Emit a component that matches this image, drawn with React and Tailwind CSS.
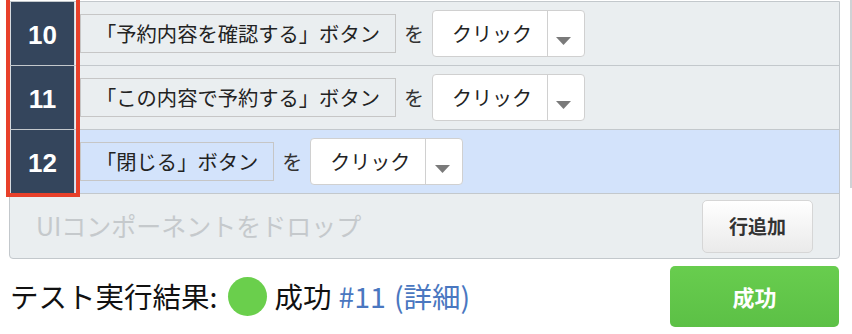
import React from "react";

const rows = [
  { n: 10, label: "「予約内容を確認する」ボタン" },
  { n: 11, label: "「この内容で予約する」ボタン" },
  { n: 12, label: "「閉じる」ボタン", active: true },
];

const jp = { fontFamily: '"Noto Sans CJK JP", "Noto Sans", sans-serif' };

const ActionSelect = () => (
  <div className="flex h-[47px] w-[153px] rounded-[4px] border border-[#d0d0d0] bg-white">
    <div className="flex w-[114px] items-center pl-[19px] text-[20px] text-[#222]">
      クリック
    </div>
    <div className="flex flex-1 items-end justify-center border-l border-[#d0d0d0] pb-[11px] pr-[4px]">
      <svg width="15" height="8" viewBox="0 0 15 8">
        <polygon points="0,0 15,0 7.5,8" fill="#7a7a7a" />
      </svg>
    </div>
  </div>
);

const StepRow = ({ n, label, active }) => (
  <div
    className={
      "flex h-[64px] border-b border-[#c3c8cc] " +
      (active ? "bg-[#d3e3fb]" : "bg-[#eaeef0]")
    }
  >
    <div
      className="flex w-[65px] items-center justify-center border-x border-[#d6dbe0] bg-[#34455c] pt-[3px] text-[26px] font-bold text-white"
      style={{ fontFamily: '"Liberation Sans", Arial, sans-serif' }}
    >
      {n}
    </div>
    <div className="flex items-center pl-[5px]">
      <div className="flex h-[39px] items-center border border-[#c6c6c6] px-[15px] text-[20.3px] text-[#222]">
        {label}
      </div>
      <span className="mx-[8px] text-[20px] text-[#333]">を</span>
      <ActionSelect />
    </div>
  </div>
);

const App = () => {
  return (
    <div className="flex h-[334px] w-[852px] items-start overflow-hidden bg-white" style={jp}>
      <div className="relative w-[850px]">
        <div className="ml-[9px] mt-[1px] w-[831px] rounded-b-[4px] border-x border-y border-[#c3c8cc] bg-[#eaeef0]">
          {rows.map((r) => (
            <StepRow key={r.n} {...r} />
          ))}
          <div className="flex h-[64px] items-center justify-between pl-[26px] pr-[26px]">
            <span className="text-[25px] text-[#c5c9cc]">UIコンポーネントをドロップ</span>
            <button className="h-[53px] w-[111px] rounded-[5px] border border-[#d6d6d6] bg-linear-to-b from-white to-[#eaeaea] text-[19px] font-bold text-[#333]">
              行追加
            </button>
          </div>
        </div>

        <div className="pointer-events-none absolute left-[6px] top-[-6px] h-[203px] w-[74px] border-4 border-[#e8402a]" />

        <div className="mt-[7px] flex items-center justify-between">
          <div className="flex items-center pl-[10px] text-[28.5px] text-[#111]">
            <span>テスト実行結果:</span>
            <span className="ml-[11px] mr-[7px] inline-block h-[39px] w-[39px] rounded-full bg-[#6acf4c]" />
            <span>成功</span>
            <span className="ml-[7px] text-[#4a77c0]">#11</span>
            <span className="ml-[8px] text-[#4a77c0]">(詳細)</span>
          </div>
          <button className="mr-[11px] h-[61px] w-[169px] rounded-[5px] bg-linear-to-b from-[#68cd4e] to-[#5cc046] text-[22px] font-bold text-white">
            成功
          </button>
        </div>
      </div>
      <div className="h-[188px] w-[2px] bg-[#cfd2d5]" />
    </div>
  );
};

export default App;
